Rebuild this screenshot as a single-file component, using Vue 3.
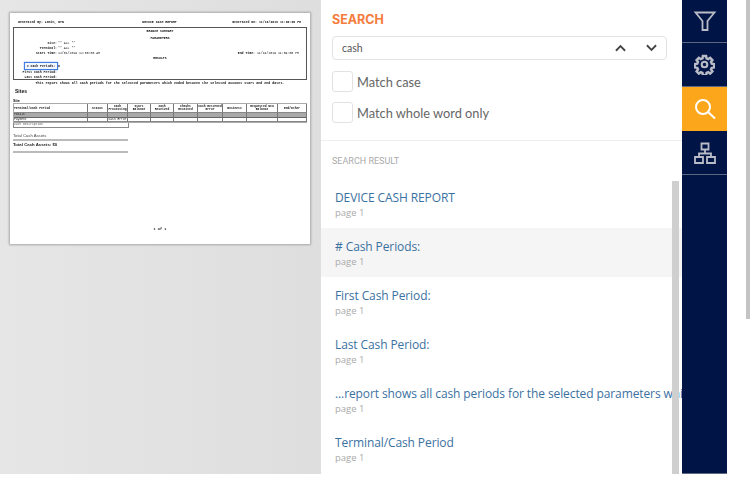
<script setup>
const headers = ['Terminal/Cash Period', 'Status', 'Cash Processing', 'Start Balance', 'Cash Received', 'Checks Received', 'Cash Returned Error', 'Business', 'Requested New Balance', 'End/Other']
const blanks = Array.from({ length: 9 })
const results = [
  { title: 'DEVICE CASH REPORT' },
  { title: '# Cash Periods:', active: true },
  { title: 'First Cash Period:' },
  { title: 'Last Cash Period:' },
  { title: '...report shows all cash periods for the selected parameters which ended between the selected' },
  { title: 'Terminal/Cash Period' }
]
</script>

<template>
  <div class="screen">
    <div class="main">
      <section class="viewer">
        <article class="sheet">
          <header class="top-line">
            <span>Generated By: Lemin, DYN</span>
            <span>DEVICE CASH REPORT</span>
            <span class="right">Generated On: 11/19/2019 11:00:00 PM</span>
          </header>
          <div class="summary">
            <div class="center bold">BRANCH SUMMARY</div>
            <div class="center bold gap-a">PARAMETERS</div>
            <div class="params">
              <b>Site:</b><span>** ALL **</span>
              <b>Terminal:</b><span>** ALL **</span>
              <b>Start Time:</b>
              <span class="dates">
                <span>11/01/2019 12:00:00 AM</span>
                <span><b>End Time:</b> 11/19/2019 11:59:00 PM</span>
              </span>
            </div>
            <div class="center bold gap-b">RESULTS</div>
            <div class="counts">
              <div class="hit"># Cash Periods:</div><b>0</b>
              <div class="count-label">First Cash Period:</div><b></b>
              <div class="count-label">Last Cash Period:</div><b></b>
            </div>
          </div>
          <p class="note">This report shows all cash periods for the selected parameters which ended between the selected account start and end dates.</p>
          <div class="site-head">Sites</div>
          <div class="site-label">Site</div>
          <div class="grid">
            <div v-for="h in headers" :key="h" class="cell head">{{ h }}</div>
            <div class="cell band">Totals</div>
            <div v-for="(b, i) in blanks" :key="'a' + i" class="cell band"></div>
            <div class="cell">Payment</div>
            <div class="cell"></div>
            <div class="cell">Cash Error</div>
            <div v-for="i in 7" :key="'b' + i" class="cell"></div>
          </div>
          <div class="desc">Cash Description</div>
          <div class="assets-label">Total Cash Assets</div>
          <div class="assets">Total Cash Assets: $0</div>
          <div class="pager">1 of 1</div>
        </article>
      </section>

      <section class="panel">
        <div class="search-box">
          <h2 class="title">SEARCH</h2>
          <div class="field">
            <span>cash</span>
            <svg class="chev" viewBox="0 0 12 8"><path d="M1 7 6 2l5 5" /></svg>
            <svg class="chev" viewBox="0 0 12 8"><path d="M1 1l5 5 5-5" /></svg>
          </div>
          <label class="check"><span class="box"></span>Match case</label>
          <label class="check"><span class="box"></span>Match whole word only</label>
        </div>
        <div class="results">
          <div class="result-head">SEARCH RESULT</div>
          <ul class="list">
            <li v-for="r in results" :key="r.title" :class="['item', { active: r.active }]">
              <div class="item-title">{{ r.title }}</div>
              <div class="item-page">page 1</div>
            </li>
          </ul>
          <div class="scroll-thumb"></div>
        </div>
      </section>

      <nav class="rail">
        <button class="rail-btn">
          <svg viewBox="0 0 24 24" width="24" height="24"><path d="M2.500 3.500h19l-7 8.500v9h-5v-9z" /></svg>
        </button>
        <button class="rail-btn">
          <svg viewBox="0 0 24 24" width="21" height="21"><path stroke-width="3.200" d="M10 2h4l.6 3 2.100.9 2.500-1.700 2.800 2.800-1.700 2.500.9 2.100 3 .6v4l-3 .6-.9 2.100 1.700 2.500-2.800 2.800-2.500-1.700-2.100.9-.6 3h-4l-.6-3-2.100-.9-2.500 1.700-2.800-2.800 1.700-2.500-.9-2.100-3-.6v-4l3-.6.9-2.100-1.700-2.500 2.800-2.800 2.500 1.700 2.100-.9z" transform="translate(1.200 .6) scale(.9)" /><circle cx="12" cy="12" r="3.200" stroke-width="2.400" /></svg>
        </button>
        <button class="rail-btn on">
          <svg viewBox="0 0 24 24" width="24" height="24"><circle cx="10" cy="10" r="7" /><path d="m15.300 15.300 6.700 6.200" /></svg>
        </button>
        <button class="rail-btn">
          <svg viewBox="0 0 24 24" width="24" height="24"><path d="M8.500 2.500h7v6h-7zM2 16h8v6H2zM14 16h8v6h-8zM12 8.500v4M6 16v-3.500h12V16" /></svg>
        </button>
        <div class="rail-fill"></div>
      </nav>

      <div class="gutter"><div class="gutter-thumb"></div></div>
    </div>
  </div>
</template>

<style scoped>
.screen { width: 750px; height: 483px; background: #fff; overflow: hidden; }
.main { display: flex; height: 474px; }

.viewer {
  width: 321px;
  flex: none;
  box-sizing: border-box;
  padding: 13px 11px 0 10px;
  background: linear-gradient(90deg, #e6e6e6, #dedede);
}
.sheet {
  box-sizing: border-box;
  height: 231px;
  padding: 8px 3px 0;
  background: #fff;
  box-shadow: 0 0 2px 1px #a8a8a8;
  font: 3.200px/1 "Liberation Mono", monospace;
  color: #111;
  filter: blur(.4px);
}
.top-line { display: grid; grid-template-columns: 1fr auto 1fr; padding: 0 6px 0 5px; font-weight: 700; height: 6px; }
.right { text-align: right; }
.summary {
  box-sizing: border-box;
  height: 53px;
  border: 1px solid #555;
  padding: 2px 0 0;
}
.center { text-align: center; }
.bold { font-weight: 700; }
.gap-a { margin-top: 3.500px; }
.params {
  display: grid;
  grid-template-columns: 43px 1fr;
  column-gap: 1px;
  margin-top: 1px;
  line-height: 5px;
}
.params > b { text-align: right; }
.dates { display: flex; justify-content: space-between; padding-right: 7px; }
.gap-b { margin-top: 1.500px; }
.counts {
  display: grid;
  grid-template-columns: 43px 1fr;
  column-gap: 1px;
  margin-top: 1px;
  font-weight: 700;
  line-height: 5px;
}
.count-label { text-align: right; white-space: nowrap; }
.hit {
  box-sizing: border-box;
  width: 34px;
  height: 8px;
  margin-left: 10px;
  line-height: 6px;
  text-align: center;
  border: 1px solid #3f7de0;
  box-shadow: 0 0 1px #3f7de0;
  background: #f2f6ff;
  white-space: nowrap;
}
.counts > b:first-of-type { line-height: 8px; }
.note { margin: 2px 0 0; text-align: center; font-weight: 700; font-size: 3.350px; white-space: nowrap; }
.site-head { margin-top: 4px; padding-left: 2px; font: 700 5px/1 "Liberation Sans", sans-serif; }
.site-label { margin-top: 6px; font: 700 3.800px/1 "Liberation Sans", sans-serif; height: 3px; }
.grid {
  display: grid;
  grid-template-columns: 74px 20px 20px 23px 23px 24px 25px 24px 31px 29px;
  grid-template-rows: 9px 5px 4px;
  border: 1px solid #aaa;
  border-width: 1px 0 1px 1px;
}
.cell { border-right: 1px solid #777; border-bottom: 1px solid #888; font-size: 3px; overflow: hidden; text-align: center; white-space: nowrap; }
.head { font-weight: 700; white-space: normal; display: flex; align-items: center; justify-content: center; line-height: 3px; }
.head:first-child { justify-content: flex-start; white-space: nowrap; }
.band { background: #a9a9a9; border-bottom-color: #666; }
.cell:nth-child(10n + 1) { text-align: left; }
.desc {
  width: 114px;
  height: 4px;
  border: 1px solid #888;
  border-top: 0;
  font-size: 3px;
  line-height: 4px;
  color: #555;
}
.assets-label { margin-top: 5px; font: 4.200px/5px "Liberation Sans", sans-serif; color: #444; height: 5px; }
.assets {
  width: 115px;
  box-sizing: border-box;
  height: 14px;
  margin-top: 1px;
  border-top: 2px solid #bbb;
  border-bottom: 2px solid #bbb;
  font: 700 4.300px/8px "Liberation Sans", sans-serif;
  color: #222;
}
.pager { margin-top: 75px; text-align: center; font-weight: 700; font-size: 3.600px; }

.panel {
  width: 361px;
  flex: none;
  box-sizing: border-box;
  display: flex;
  flex-direction: column;
  overflow: hidden;
  background: #fff;
  font-family: "Open Sans", sans-serif;
}
.search-box {
  box-sizing: border-box;
  height: 141px;
  padding: 11px 15px 0 11px;
  border-bottom: 1px solid #eeeeee;
}
.title { margin: 0; font: 700 12.500px/17px Inter, sans-serif; color: #f47c3c; }
.field {
  display: flex;
  align-items: center;
  gap: 20px;
  height: 24px;
  margin-top: 8px;
  padding: 0 9px;
  box-sizing: border-box;
  border: 1px solid #e3e3e3;
  border-radius: 4px;
  font: 10.500px Lato, sans-serif;
  color: #555;
}
.field span { flex: 1; }
.chev { width: 11px; height: 8px; fill: none; stroke: #444; stroke-width: 2; overflow: visible; }
.check { display: flex; align-items: center; gap: 4px; height: 21px; margin-top: 10px; font: 12.800px Lato, sans-serif; color: #666; }
.field + .check { margin-top: 11px; }
.box { width: 19px; height: 19px; border: 1px solid #e2e2e2; border-radius: 3px; }
.results { position: relative; flex: 1; min-height: 0; overflow: hidden; }
.result-head { padding: 14px 0 0 11px; height: 24px; box-sizing: border-box; font: 9px/12px Roboto, sans-serif; color: #aaa; }
.list { margin: 14px 0 0; padding: 0; list-style: none; }
.item { box-sizing: border-box; height: 49px; padding: 10px 0 0 14px; white-space: nowrap; overflow: hidden; }
.item.active { background: #f5f5f5; }
.item-title { font: 12px/17px "Open Sans", sans-serif; color: #3a719f; letter-spacing: -.1px; }
.item-page { font: 9.500px/13px "Open Sans", sans-serif; color: #aaa; }
.scroll-thumb { position: absolute; left: 351px; top: 40px; bottom: 0; width: 7px; background: #cfcfcf; }

.rail { width: 45px; flex: none; display: flex; flex-direction: column; background: #001446; }
.rail-btn {
  height: 44px;
  padding: 0;
  border: 0;
  background: #001446;
  border-bottom: 1px solid #5d6782;
  display: flex;
  align-items: center;
  justify-content: center;
}
.rail-btn:nth-child(1) { height: 43px; }
.rail-btn svg { fill: none; stroke: #b9bcc6; stroke-width: 1.800; }
.rail-btn.on { background: #fca61c; border-bottom-color: #fca61c; }
.rail-btn.on svg { stroke: #fff; stroke-width: 2; }
.rail-fill { flex: 1; border-bottom: 1px solid #5d6782; }
.gutter { flex: 1; padding-left: 19px; }
.gutter-thumb { width: 4px; height: 319px; background: #c4c4c4; }
</style>
